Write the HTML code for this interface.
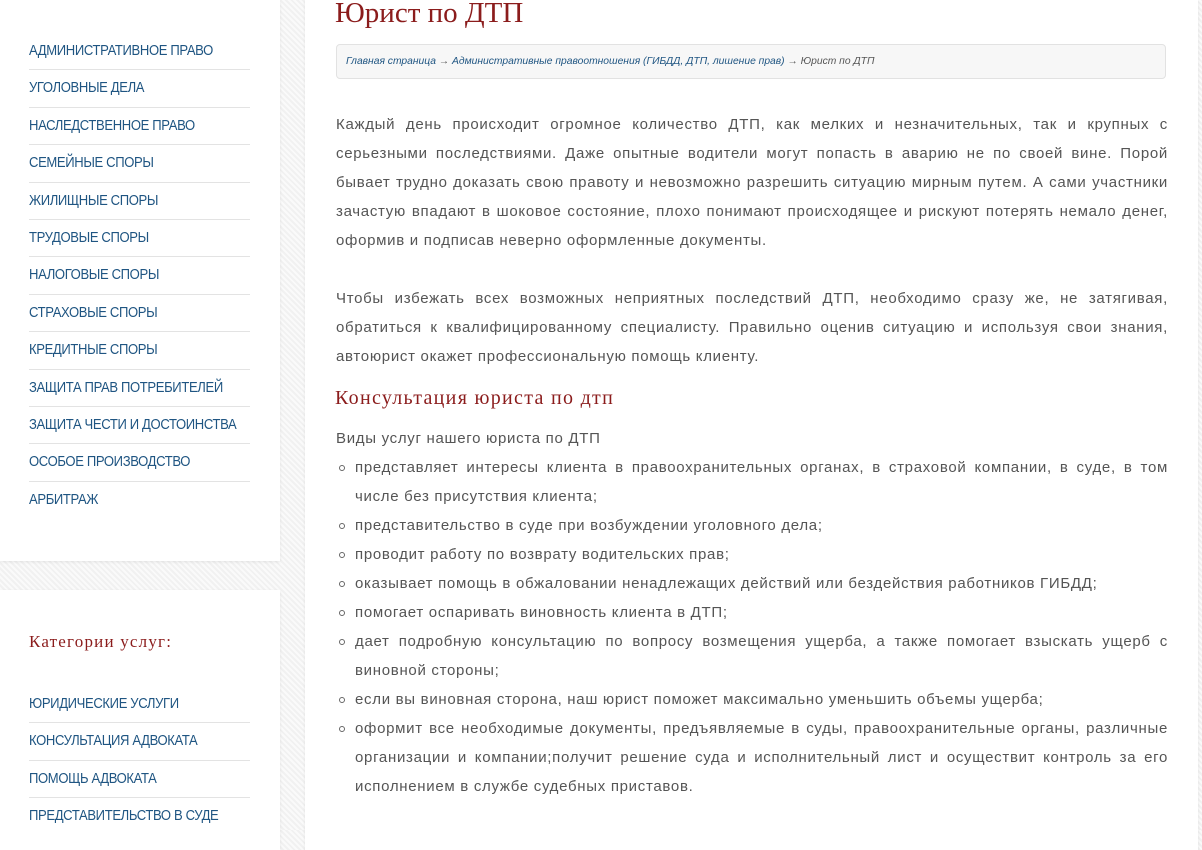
<!DOCTYPE html>
<html><head><meta charset="utf-8"><style>
*{margin:0;padding:0;box-sizing:border-box}
body{width:1202px;height:830px;overflow:hidden;position:relative;font-family:"Liberation Sans","Noto Sans CJK SC",sans-serif;
background:repeating-linear-gradient(45deg,#f1f1f1 0 2px,#fafafa 2px 4px);}
.box{position:absolute;background:#fff;box-shadow:0 1px 3px rgba(0,0,0,.08)}
.nav{list-style:none;position:absolute;left:29px;width:221px}
.nav li{height:37.4px;border-bottom:1px solid #e3e3e3;font-size:14.5px;color:#1f5582;line-height:37px;letter-spacing:-0.4px;white-space:nowrap}
.nav li:last-child{border-bottom:none}
.nav li span{display:inline-block;transform:scaleX(.9);transform-origin:left}
h1{position:absolute;left:335px;top:-3px;font-family:"Liberation Serif",serif;font-weight:normal;font-size:29px;color:#8b1c1c}
.bc{position:absolute;left:336px;top:44px;width:830px;height:35px;background:#f7f7f7;border:1px solid #e2e2e2;border-radius:4px;font-size:10.3px;font-style:italic;color:#555;padding:11px 9px;white-space:nowrap}
.bc a{color:#1f5582;text-decoration:none}
.txt{position:absolute;left:336px;width:832px;font-size:15px;color:#555;line-height:29px;text-align:justify;letter-spacing:.7px}
h2{position:absolute;left:335px;top:387px;font-family:"Liberation Serif",serif;font-weight:normal;font-size:20px;color:#8b1c1c;letter-spacing:1.3px}
ul.l{list-style:none}
ul.l li{position:relative;padding-left:19px}
ul.l li:before{content:"";position:absolute;left:3px;top:12px;width:4px;height:4px;border:1px solid #666;border-radius:50%}
</style></head><body>
<div class="box" style="left:0;top:0;width:280px;height:561px"></div>
<div class="box" style="left:0;top:590px;width:280px;height:260px"></div>
<div class="box" style="left:305px;top:0;width:893px;height:850px"></div>
<ul class="nav" style="top:33px">
<li><span>АДМИНИСТРАТИВНОЕ ПРАВО</span></li><li><span>УГОЛОВНЫЕ ДЕЛА</span></li><li><span>НАСЛЕДСТВЕННОЕ ПРАВО</span></li><li><span>СЕМЕЙНЫЕ СПОРЫ</span></li><li><span>ЖИЛИЩНЫЕ СПОРЫ</span></li><li><span>ТРУДОВЫЕ СПОРЫ</span></li><li><span>НАЛОГОВЫЕ СПОРЫ</span></li><li><span>СТРАХОВЫЕ СПОРЫ</span></li><li><span>КРЕДИТНЫЕ СПОРЫ</span></li><li><span>ЗАЩИТА ПРАВ ПОТРЕБИТЕЛЕЙ</span></li><li><span>ЗАЩИТА ЧЕСТИ И ДОСТОИНСТВА</span></li><li><span>ОСОБОЕ ПРОИЗВОДСТВО</span></li><li><span>АРБИТРАЖ</span></li>
</ul>
<div style="position:absolute;left:29px;top:632px;font-family:'Liberation Serif',serif;font-size:17px;color:#8b1c1c;letter-spacing:1.2px">Категории услуг:</div>
<ul class="nav" style="top:686px">
<li><span>ЮРИДИЧЕСКИЕ УСЛУГИ</span></li><li><span>КОНСУЛЬТАЦИЯ АДВОКАТА</span></li><li><span>ПОМОЩЬ АДВОКАТА</span></li><li><span>ПРЕДСТАВИТЕЛЬСТВО В СУДЕ</span></li>
</ul>
<h1>Юрист по ДТП</h1>
<div class="bc"><a>Главная страница</a> → <a>Административные правоотношения (ГИБДД, ДТП, лишение прав)</a> → Юрист по ДТП</div>
<div class="txt" style="top:110px">Каждый день происходит огромное количество ДТП, как мелких и незначительных, так и крупных с серьезными последствиями. Даже опытные водители могут попасть в аварию не по своей вине. Порой бывает трудно доказать свою правоту и невозможно разрешить ситуацию мирным путем. А сами участники зачастую впадают в шоковое состояние, плохо понимают происходящее и рискуют потерять немало денег, оформив и подписав неверно оформленные документы.</div>
<div class="txt" style="top:284px">Чтобы избежать всех возможных неприятных последствий ДТП, необходимо сразу же, не затягивая, обратиться к квалифицированному специалисту. Правильно оценив ситуацию и используя свои знания, автоюрист окажет профессиональную помощь клиенту.</div>
<h2>Консультация юриста по дтп</h2>
<div class="txt" style="top:424px">Виды услуг нашего юриста по ДТП
<ul class="l">
<li>представляет интересы клиента в правоохранительных органах, в страховой компании, в суде, в том числе без присутствия клиента;</li>
<li>представительство в суде при возбуждении уголовного дела;</li>
<li>проводит работу по возврату водительских прав;</li>
<li>оказывает помощь в обжаловании ненадлежащих действий или бездействия работников ГИБДД;</li>
<li>помогает оспаривать виновность клиента в ДТП;</li>
<li>дает подробную консультацию по вопросу возмещения ущерба, а также помогает взыскать ущерб с виновной стороны;</li>
<li>если вы виновная сторона, наш юрист поможет максимально уменьшить объемы ущерба;</li>
<li>оформит все необходимые документы, предъявляемые в суды, правоохранительные органы, различные организации и компании;получит решение суда и исполнительный лист и осуществит контроль за его исполнением в службе судебных приставов.</li>
</ul></div>
</body></html>
